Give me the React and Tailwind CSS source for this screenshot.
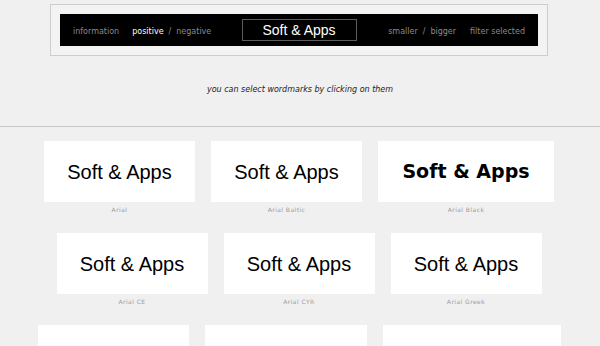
import React from 'react';

const wordmarks = [
  [
    { label: 'Arial', w: 'w-[151px]', font: "font-['Liberation_Sans',Arial,sans-serif] text-[20px]" },
    { label: 'Arial Baltic', w: 'w-[151px]', font: "font-['Liberation_Sans',Arial,sans-serif] text-[20px]" },
    { label: 'Arial Black', w: 'w-[176px]', font: "font-['DejaVu_Sans',sans-serif] font-bold text-[19px]" },
  ],
  [
    { label: 'Arial CE', w: 'w-[151px]', font: "font-['Liberation_Sans',Arial,sans-serif] text-[20px]" },
    { label: 'Arial CYR', w: 'w-[151px]', font: "font-['Liberation_Sans',Arial,sans-serif] text-[20px]" },
    { label: 'Arial Greek', w: 'w-[151px]', font: "font-['Liberation_Sans',Arial,sans-serif] text-[20px]" },
  ],
  [
    { label: 'Arial Narrow', w: 'w-[151px]', font: "font-['Liberation_Sans_Narrow','Liberation_Sans',sans-serif] text-[20px]" },
    { label: 'Arial Rounded MT Bold', w: 'w-[162px]', font: "font-['Liberation_Sans',sans-serif] font-bold text-[20px]" },
    { label: 'Arial Unicode MS', w: 'w-[178px]', font: "font-['DejaVu_Sans',sans-serif] text-[20px]" },
  ],
];

const Wordmark = ({ item }) => (
  <div className="flex flex-col items-center cursor-pointer">
    <div className={`${item.w} h-[61px] bg-white flex items-center justify-center text-black ${item.font}`}>
      Soft &amp; Apps
    </div>
    <div className="mt-[4px] h-[8px] text-[6px] leading-[8px] tracking-[0.45px] text-[#9a9a9a]">{item.label}</div>
  </div>
);

const App = () => {
  return (
    <div className="min-h-screen bg-[#f0f0f0] font-['DejaVu_Sans',sans-serif] pt-[4px] overflow-hidden">
      <div className="ml-[50px] w-[498px] h-[52px] border border-[#cdcdcd] bg-[#f3f3f3] p-[9px]">
        <div className="h-[32px] bg-black flex items-center px-[13px] text-[8px] text-[#8a8a8a]">
          <div className="flex-1 flex items-center pt-[3px]">
            <span>information</span>
            <span className="ml-[13px] text-white">positive</span>
            <span className="mx-[5px]">/</span>
            <span>negative</span>
          </div>
          <div className="w-[115px] h-[22px] border border-[#5c5c5c] flex items-center justify-center text-white text-[14px] font-['Liberation_Sans',Arial,sans-serif]">
            Soft &amp; Apps
          </div>
          <div className="flex-1 flex items-center justify-end pt-[3px]">
            <span>smaller</span>
            <span className="mx-[5px]">/</span>
            <span>bigger</span>
            <span className="ml-[14px]">filter selected</span>
          </div>
        </div>
      </div>

      <p className="mt-[29px] text-center text-[8px] leading-[10px] italic text-[#222]">
        you can select wordmarks by clicking on them
      </p>

      <div className="mt-[31px] border-t border-[#c8c8c8]" />

      <div className="pt-[14px] pr-[2px] flex flex-col items-center gap-y-[19px]">
        {wordmarks.map((row, i) => (
          <div key={i} className="flex justify-center gap-x-[16px]">
            {row.map(item => (
              <Wordmark key={item.label} item={item} />
            ))}
          </div>
        ))}
      </div>
    </div>
  );
};

export default App;
